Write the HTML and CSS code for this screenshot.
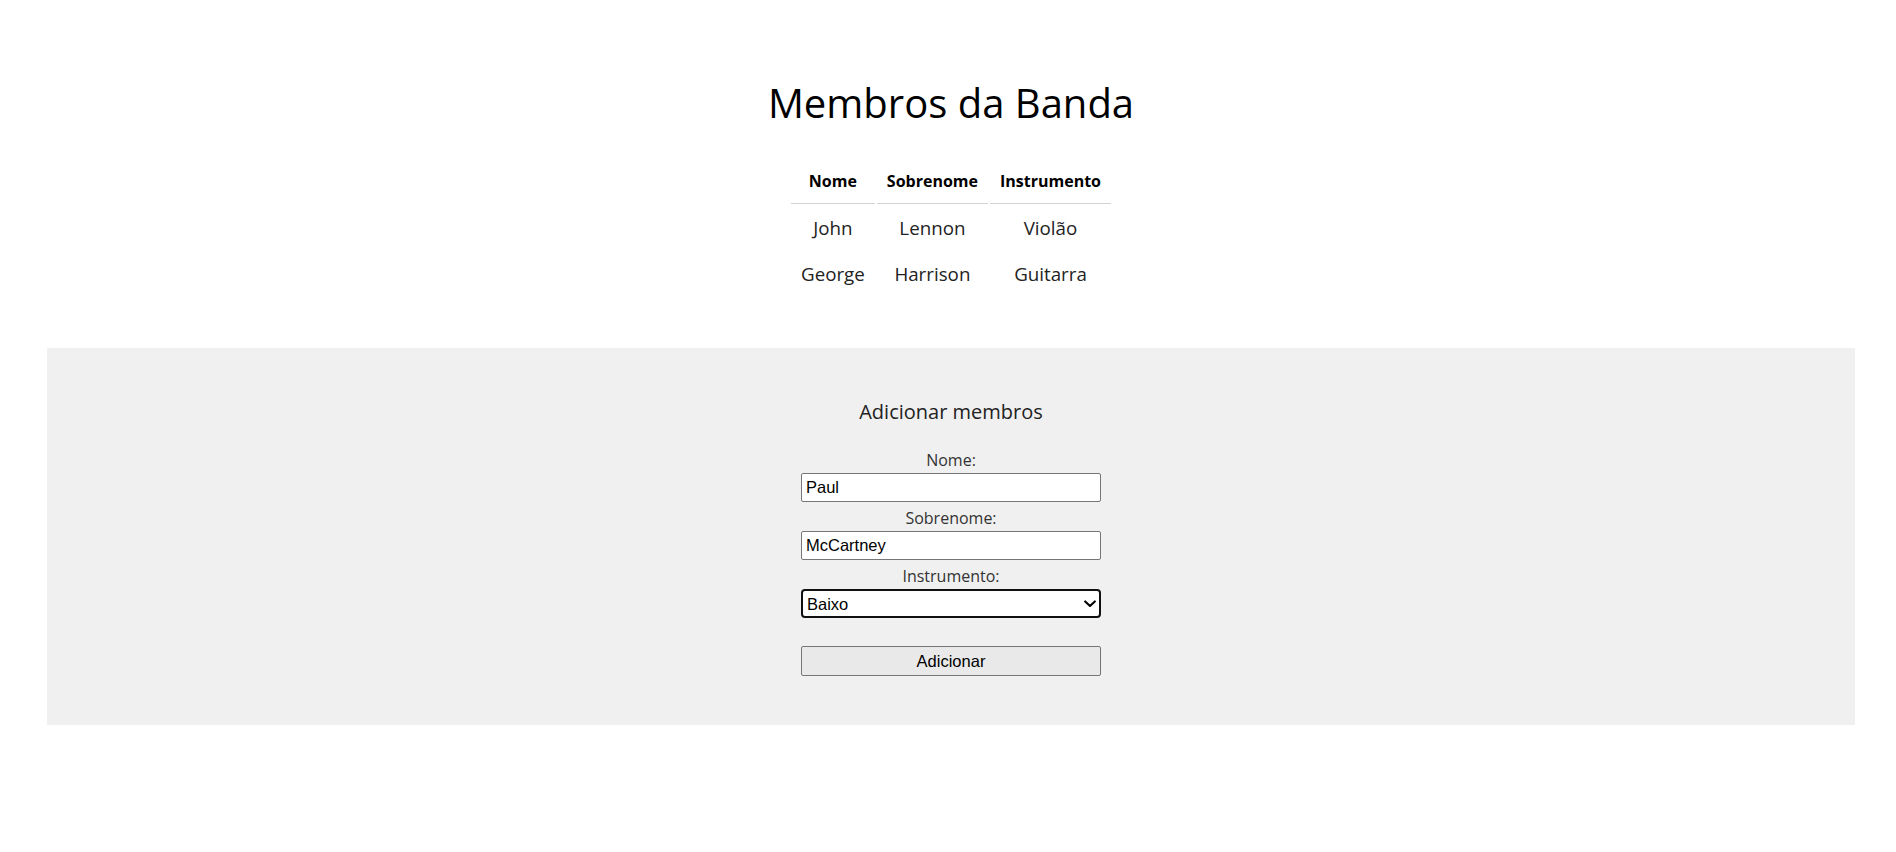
FILE: index.html
```html
<!DOCTYPE html>
<html lang="pt">
<head>
<meta charset="utf-8">
<title>Membros da Banda</title>
<link rel="stylesheet" href="styles.css">
</head>
<body>
<div class="page">
  <h1 class="title">Membros da Banda</h1>
  <table class="members">
    <thead>
      <tr><th>Nome</th><th>Sobrenome</th><th>Instrumento</th></tr>
    </thead>
    <tbody>
      <tr><td>John</td><td>Lennon</td><td>Violão</td></tr>
      <tr><td>George</td><td>Harrison</td><td>Guitarra</td></tr>
    </tbody>
  </table>
  <section class="add">
    <h3 class="add-title">Adicionar membros</h3>
    <form class="form">
      <label class="label" for="nome">Nome:</label>
      <input class="field" id="nome" type="text" value="Paul">
      <label class="label" for="sobrenome">Sobrenome:</label>
      <input class="field" id="sobrenome" type="text" value="McCartney">
      <label class="label" for="instrumento">Instrumento:</label>
      <div class="select-wrap">
        <select class="field select" id="instrumento">
          <option>Baixo</option>
          <option>Guitarra</option>
          <option>Violão</option>
          <option>Bateria</option>
        </select>
        <svg class="chevron" width="12" height="8" viewBox="0 0 12 8" aria-hidden="true">
          <path d="M1.2 1.4 L6 6 L10.8 1.4" fill="none" stroke="#000" stroke-width="2.1" stroke-linecap="round" stroke-linejoin="round"/>
        </svg>
      </div>
      <button class="btn" type="button">Adicionar</button>
    </form>
  </section>
</div>
</body>
</html>
```

FILE: styles.css
```css
html, body {
  margin: 0;
  padding: 0;
  background: #ffffff;
}

body {
  font-family: "Open Sans", "Liberation Sans", sans-serif;
  color: #222222;
}

.page {
  padding: 76px 41px 0 47px;
  display: flex;
  flex-direction: column;
  align-items: center;
}

.title {
  margin: 0 0 28px;
  font-size: 40px;
  font-weight: 400;
  line-height: 54px;
  color: #000000;
  text-align: center;
}

.members {
  border-collapse: separate;
  border-spacing: 2px;
  margin: 0 0 50px;
}

.members th {
  font-size: 16px;
  font-weight: 700;
  line-height: 22px;
  color: #000000;
  padding: 10px 10px 11px;
  border-bottom: 1px solid #d3d3d3;
  text-align: center;
}

.members td {
  font-size: 18.75px;
  line-height: 26px;
  padding: 9px 10px 9px;
  text-align: center;
  color: #222222;
}

.add {
  align-self: stretch;
  background: #f0f0f0;
  padding: 50px 0 49px;
  display: flex;
  flex-direction: column;
  align-items: center;
}

.add-title {
  margin: 0 0 24px;
  font-size: 20px;
  font-weight: 400;
  line-height: 27px;
  color: #222222;
}

.form {
  width: 300px;
  display: flex;
  flex-direction: column;
  align-items: stretch;
}

.label {
  font-size: 16px;
  line-height: 22px;
  margin-bottom: 2px;
  text-align: center;
  color: #333333;
}

.field {
  box-sizing: border-box;
  width: 100%;
  height: 29px;
  margin: 0 0 5px;
  padding: 0 4px;
  border: 1px solid #767676;
  border-radius: 2px;
  background: #ffffff;
  font-family: "Liberation Sans", Arial, sans-serif;
  font-size: 16.5px;
  color: #000000;
}

.select-wrap {
  position: relative;
  display: flex;
  margin-bottom: 5px;
}

.select {
  -webkit-appearance: none;
  appearance: none;
  margin: 0;
  border: 2px solid #101010;
  border-radius: 4px;
  padding: 0 24px 0 4px;
}

.chevron {
  position: absolute;
  right: 5px;
  top: 11px;
  pointer-events: none;
}

.btn {
  box-sizing: border-box;
  height: 30px;
  margin-top: 23px;
  border: 1px solid #767676;
  border-radius: 2px;
  background: #e9e9e9;
  font-family: "Liberation Sans", Arial, sans-serif;
  font-size: 16.5px;
  color: #000000;
}
```
